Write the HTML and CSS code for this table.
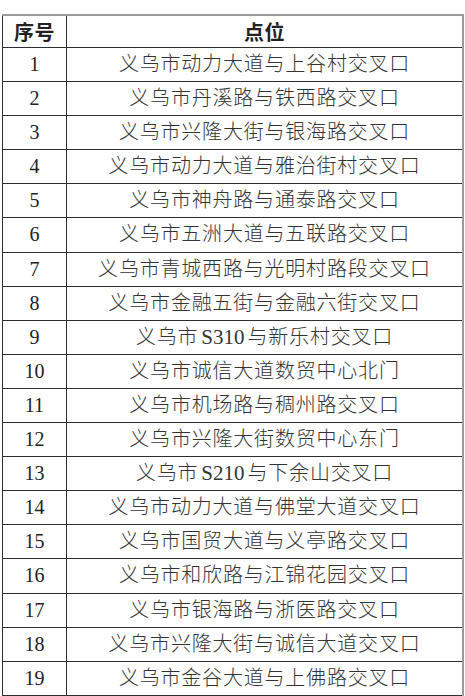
FILE: index.html
```html
<!DOCTYPE html>
<html lang="zh-CN">
<head>
<meta charset="utf-8">
<title>点位</title>
<link rel="stylesheet" href="styles.css">
</head>
<body>
<table class="sites">
  <thead>
    <tr><th class="num">序号</th><th class="place">点位</th></tr>
  </thead>
  <tbody>
    <tr><td class="num">1</td><td class="place">义乌市动力大道与上谷村交叉口</td></tr>
    <tr><td class="num">2</td><td class="place">义乌市丹溪路与铁西路交叉口</td></tr>
    <tr><td class="num">3</td><td class="place">义乌市兴隆大街与银海路交叉口</td></tr>
    <tr><td class="num">4</td><td class="place">义乌市动力大道与雅治街村交叉口</td></tr>
    <tr><td class="num">5</td><td class="place">义乌市神舟路与通泰路交叉口</td></tr>
    <tr><td class="num">6</td><td class="place">义乌市五洲大道与五联路交叉口</td></tr>
    <tr><td class="num">7</td><td class="place">义乌市青城西路与光明村路段交叉口</td></tr>
    <tr><td class="num">8</td><td class="place">义乌市金融五街与金融六街交叉口</td></tr>
    <tr><td class="num">9</td><td class="place">义乌市<span class="latin">S310</span>与新乐村交叉口</td></tr>
    <tr><td class="num">10</td><td class="place">义乌市诚信大道数贸中心北门</td></tr>
    <tr><td class="num">11</td><td class="place">义乌市机场路与稠州路交叉口</td></tr>
    <tr><td class="num">12</td><td class="place">义乌市兴隆大街数贸中心东门</td></tr>
    <tr><td class="num">13</td><td class="place">义乌市<span class="latin">S210</span>与下余山交叉口</td></tr>
    <tr><td class="num">14</td><td class="place">义乌市动力大道与佛堂大道交叉口</td></tr>
    <tr><td class="num">15</td><td class="place">义乌市国贸大道与义亭路交叉口</td></tr>
    <tr><td class="num">16</td><td class="place">义乌市和欣路与江锦花园交叉口</td></tr>
    <tr><td class="num">17</td><td class="place">义乌市银海路与浙医路交叉口</td></tr>
    <tr><td class="num">18</td><td class="place">义乌市兴隆大街与诚信大道交叉口</td></tr>
    <tr><td class="num">19</td><td class="place">义乌市金谷大道与上佛路交叉口</td></tr>
  </tbody>
</table>
</body>
</html>
```

FILE: styles.css
```css
html, body {
  margin: 0;
  padding: 0;
  background: #ffffff;
}

body {
  padding: 14px 0 0 2px;
  font-family: "Liberation Serif", "Noto Sans CJK SC", serif;
  color: #2b2b2b;
}

.sites {
  border-collapse: collapse;
  width: 462px;
  table-layout: fixed;
  border-top: 2px solid #9a9a9a;
  border-right: 2px solid #9a9a9a;
  border-left: 1px solid #2a2a2a;
  border-bottom: 1px solid #bdbdbd;
}

.sites th,
.sites td {
  border: 1px solid #2e2e2e;
  padding: 0;
  text-align: center;
  vertical-align: middle;
}

.sites th {
  line-height: 31px;
  font-family: "Noto Sans CJK SC", sans-serif;
  font-weight: 700;
  font-size: 20px;
  color: #222222;
  letter-spacing: 0.5px;
}

.sites td {
  line-height: 33.1px;
  font-size: 20px;
}

.sites .num {
  width: 63px;
  color: #222222;
}

.sites td.num {
  font-family: "Liberation Serif", serif;
}

.sites td.place {
  font-family: "Liberation Serif", "Noto Sans CJK SC", serif;
  font-weight: 300;
  color: #333333;
  letter-spacing: 0.8px;
}

.sites .latin {
  font-family: "Liberation Serif", serif;
  font-weight: 400;
  letter-spacing: 0;
  font-size: 21px;
  margin: 0 3px;
}
```
